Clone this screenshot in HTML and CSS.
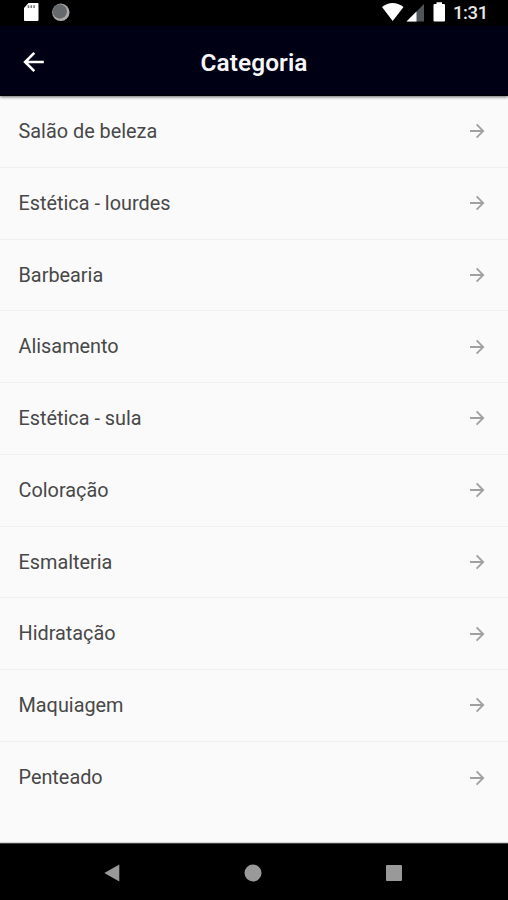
FILE: index.html
```html
<!DOCTYPE html>
<html lang="pt-BR">
<head>
<meta charset="utf-8">
<title>Categoria</title>
<link rel="stylesheet" href="styles.css">
</head>
<body>
<svg class="defs" width="0" height="0"><symbol id="arrow" viewBox="0 0 16 16"><path d="M1 8H14M7.6 1.4 14.2 8 7.6 14.6" fill="none" stroke="currentColor" stroke-width="1.8"/></symbol></svg>
<div class="screen">
  <div class="status">
    <svg class="status-left" width="60" height="26" viewBox="0 0 60 26"><path d="M6.5 3H15.5Q16.5 3 16.5 4V20Q16.5 21 15.5 21H3Q2 21 2 20V8Z" fill="#fff"/><path d="M6.5 5.2V8M9.3 5.2V8M12.1 5.2V8" stroke="#777" stroke-width="1.6"/><circle cx="38.8" cy="12.3" r="8.7" fill="#aaa"/><circle cx="37.8" cy="11.5" r="7.2" fill="#66696b"/></svg>
    <svg class="status-right" width="68" height="26" viewBox="0 0 68 26"><path d="M1 7Q11.5 -1 22.5 7L11.7 21Z" fill="#fff"/><path d="M43 4V21.5H25.5Z" fill="#50555a"/><path d="M35.5 11.5V21.5H25.5Z" fill="#fff"/><path d="M53.5 4H55.5V2.3H61V4H63Q64 4 64 5V20.5Q64 21.5 63 21.5H53.5Q52.5 21.5 52.5 20.5V5Q52.5 4 53.5 4Z" fill="#fff"/></svg>
    <span class="time">1:31</span>
  </div>
  <header class="bar">
    <svg class="back" width="22" height="22" viewBox="0 0 22 22"><path d="M21.8 11H3.5M12.3 1.8 3.1 11 12.3 20.2" fill="none" stroke="#fff" stroke-width="2.6"/></svg>
    <h1 class="title">Categoria</h1>
  </header>
  <main class="list">
    <div class="row"><span>Salão de beleza</span><svg class="go"><use href="#arrow"/></svg></div>
    <div class="row"><span>Estética - lourdes</span><svg class="go"><use href="#arrow"/></svg></div>
    <div class="row"><span>Barbearia</span><svg class="go"><use href="#arrow"/></svg></div>
    <div class="row"><span>Alisamento</span><svg class="go"><use href="#arrow"/></svg></div>
    <div class="row"><span>Estética - sula</span><svg class="go"><use href="#arrow"/></svg></div>
    <div class="row"><span>Coloração</span><svg class="go"><use href="#arrow"/></svg></div>
    <div class="row"><span>Esmalteria</span><svg class="go"><use href="#arrow"/></svg></div>
    <div class="row"><span>Hidratação</span><svg class="go"><use href="#arrow"/></svg></div>
    <div class="row"><span>Maquiagem</span><svg class="go"><use href="#arrow"/></svg></div>
    <div class="row"><span>Penteado</span><svg class="go"><use href="#arrow"/></svg></div>
  </main>
  <nav class="nav">
    <svg width="18" height="18" viewBox="0 0 18 18"><path d="M1.3 9 16.3 .5V17.5Z" fill="#999"/></svg>
    <svg width="18" height="18" viewBox="0 0 18 18"><circle cx="9" cy="9" r="8.5" fill="#999"/></svg>
    <svg width="18" height="18" viewBox="0 0 18 18"><rect x="1" y="1" width="16" height="16" rx="1" fill="#999"/></svg>
  </nav>
</div>
</body>
</html>
```
FILE: styles.css
```css
* { box-sizing: border-box; }
body { margin: 0; font-family: Roboto, sans-serif; background: #fafafa; }
.defs { display: block; }
.screen { width: 508px; height: 900px; display: flex; flex-direction: column; overflow: hidden; }
.status { height: 26px; background: #000; display: flex; align-items: center; padding: 0 21px 0 22px; flex: none; }
.status-right { margin-left: auto; }
.time { color: #e8e8e8; font-size: 18.5px; font-weight: 500; line-height: 26px; width: 34px; margin-left: 4px; letter-spacing: -.4px; white-space: nowrap; }
.bar { height: 70px; flex: none; background: #000014; display: grid; grid-template-columns: 46px 1fr 46px; align-items: center; padding: 2px 0 0; border-bottom: 1px solid #000; box-shadow: 0 1px 3px rgba(0, 0, 0, .6); z-index: 1; }
.back { margin-left: 22px; }
.title { margin: 0; padding-top: 2px; text-align: center; color: #f7f7fa; font-size: 24.4px; font-weight: 600; letter-spacing: .1px; line-height: 30px; }
.list { flex: 1; background: #fafafa; }
.row { height: 71.75px; display: flex; align-items: center; justify-content: space-between; padding: 0 23px 0 18.5px; border-bottom: 1px solid #f0f0f0; color: #484848; font-size: 19.85px; line-height: 24px; }
.row span { padding-top: 1.4px; }
.row:last-child { border-bottom: 0; }
.go { width: 16px; height: 16px; color: #a0a0a0; }
.nav { height: 57px; flex: none; background: #000; border-top: 1px solid #444; box-shadow: 0 -1px 0 #d4d4d4; display: flex; justify-content: space-between; align-items: center; padding: 1px 105px 0 103px; }
```
